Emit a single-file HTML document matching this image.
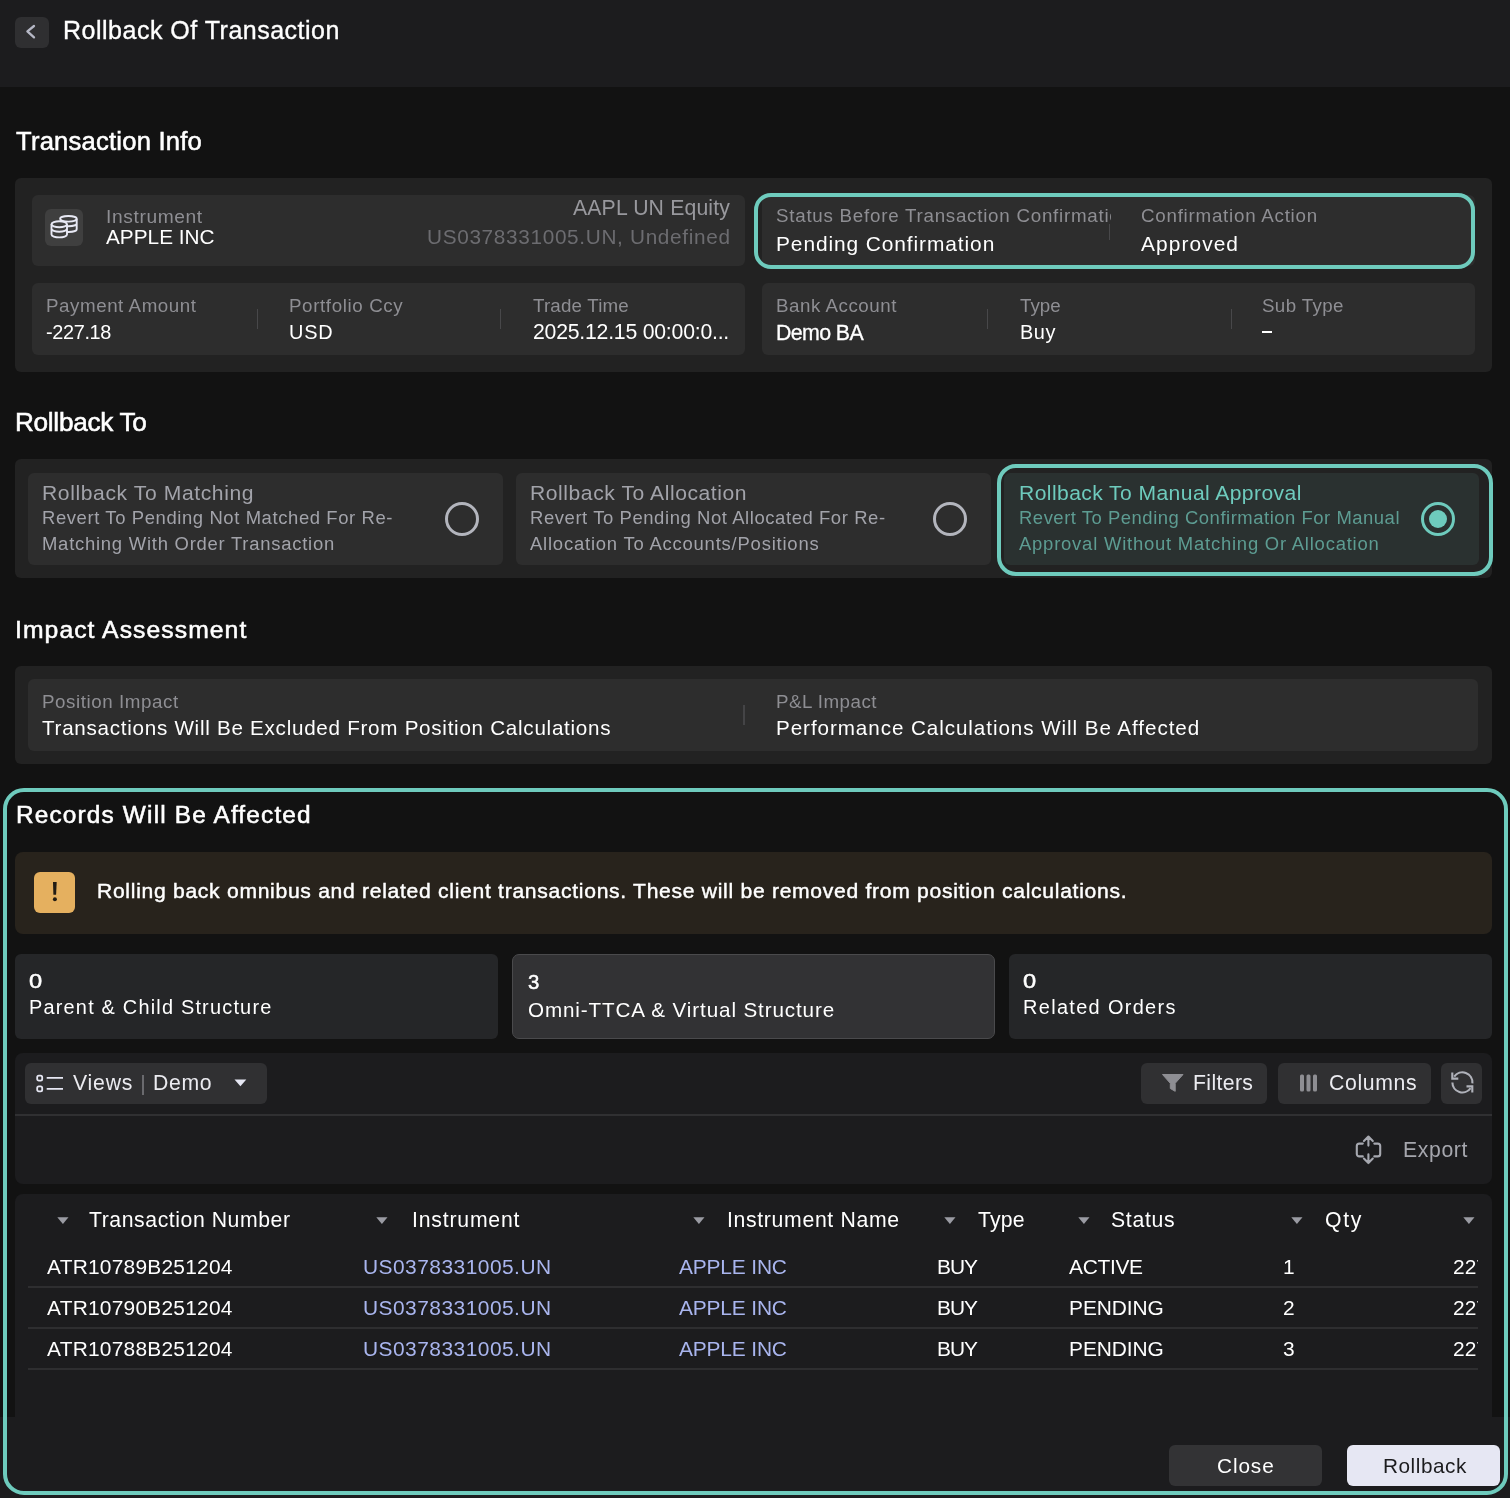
<!DOCTYPE html>
<html><head><meta charset="utf-8"><style>
html,body{margin:0;padding:0;}
body{width:1510px;height:1498px;background:#121212;position:relative;overflow:hidden;font-family:"Liberation Sans",sans-serif;}
.a{position:absolute;}
.t{white-space:nowrap;will-change:transform;}
</style></head><body>
<div class="a" style="left:0px;top:0px;width:1510px;height:87px;background:#1c1c1e;"></div>
<div class="a" style="left:15px;top:17px;width:34px;height:31px;background:#2f2f31;border-radius:6px;"></div>
<svg class="a" style="left:15px;top:17px" width="34" height="31" viewBox="0 0 34 31"><path d="M19 9 L12.4 14.4 L19 20.4" fill="none" stroke="#b6b8c6" stroke-width="2.3" stroke-linecap="round" stroke-linejoin="round"/></svg>
<div class="a t" style="left:63.00px;top:14.23px;font-size:25.00px;line-height:32px;color:#ffffff;letter-spacing:0.501px;-webkit-text-stroke:0.35px #ffffff;">Rollback Of Transaction</div>
<div class="a t" style="left:15.50px;top:125.03px;font-size:25.58px;line-height:33px;color:#ffffff;letter-spacing:0.218px;-webkit-text-stroke:0.55px #ffffff;">Transaction Info</div>
<div class="a" style="left:15px;top:178px;width:1477px;height:194px;background:#222222;border-radius:6px;"></div>
<div class="a" style="left:32px;top:195px;width:713px;height:71px;background:#2d2d2d;border-radius:6px;"></div>
<div class="a" style="left:45px;top:209px;width:37.5px;height:37px;background:#3f3f3f;border-radius:6px;"></div>
<svg class="a" style="left:45px;top:209px" width="38" height="37" viewBox="0 0 38 37"><g fill="none" stroke="#e8e9f5" stroke-width="1.9">
<ellipse cx="23.4" cy="9.8" rx="8.3" ry="2.8"/><path d="M31.7 9.8 V20.2 M15.1 14.5 A8.3 2.8 0 0 0 31.7 14.5 M15.1 20.2 A8.3 2.8 0 0 0 31.7 20.2"/>
<path d="M6.5 15.2 A7.75 3 0 0 1 22 15.2 V25.4 A7.75 3 0 0 1 6.5 25.4 Z" fill="#3f3f3f" stroke="none"/>
<ellipse cx="14.25" cy="15.2" rx="7.75" ry="3"/><path d="M6.5 15.2 V25.4 M22 15.2 V25.4 M6.5 19.7 A7.75 3 0 0 0 22 19.7 M6.5 25.4 A7.75 3 0 0 0 22 25.4"/>
</g></svg>
<div class="a t" style="left:106.20px;top:204.15px;font-size:19.19px;line-height:25px;color:#8e8e93;letter-spacing:0.616px;">Instrument</div>
<div class="a t" style="left:106.00px;top:223.39px;font-size:20.78px;line-height:27px;color:#ffffff;letter-spacing:0.012px;">APPLE INC</div>
<div class="a t" style="left:573.30px;top:193.94px;font-size:21.22px;line-height:28px;color:#98989d;letter-spacing:0.153px;">AAPL UN Equity</div>
<div class="a t" style="left:426.90px;top:223.19px;font-size:20.78px;line-height:27px;color:#6c6c70;letter-spacing:0.667px;">US0378331005.UN, Undefined</div>
<div class="a" style="left:762px;top:195px;width:713px;height:71px;background:#2d2d2d;border-radius:6px;"></div>
<div class="a t" style="left:776.00px;top:204.40px;font-size:18.75px;line-height:24px;color:#8e8e93;letter-spacing:0.749px;width:334.50px;overflow:hidden;">Status Before Transaction Confirmation</div>
<div class="a" style="left:1109px;top:224px;width:1px;height:16px;background:#48484a;"></div>
<div class="a t" style="left:1141.20px;top:204.40px;font-size:18.75px;line-height:24px;color:#8e8e93;letter-spacing:0.752px;">Confirmation Action</div>
<div class="a t" style="left:775.70px;top:230.14px;font-size:20.93px;line-height:27px;color:#ffffff;letter-spacing:0.898px;">Pending Confirmation</div>
<div class="a t" style="left:1141.00px;top:230.14px;font-size:20.93px;line-height:27px;color:#ffffff;letter-spacing:1.060px;">Approved</div>
<div class="a" style="left:32px;top:283px;width:713px;height:72px;background:#2d2d2d;border-radius:6px;"></div>
<div class="a t" style="left:46.00px;top:293.60px;font-size:18.75px;line-height:24px;color:#8e8e93;letter-spacing:0.555px;">Payment Amount</div>
<div class="a t" style="left:46.00px;top:318.80px;font-size:19.91px;line-height:26px;color:#ffffff;letter-spacing:-0.351px;">-227.18</div>
<div class="a" style="left:257px;top:309px;width:1px;height:20px;background:#48484a;"></div>
<div class="a t" style="left:289.00px;top:293.60px;font-size:18.75px;line-height:24px;color:#8e8e93;letter-spacing:0.616px;">Portfolio Ccy</div>
<div class="a t" style="left:289.00px;top:318.80px;font-size:19.91px;line-height:26px;color:#ffffff;letter-spacing:0.842px;">USD</div>
<div class="a" style="left:500px;top:309px;width:1px;height:20px;background:#48484a;"></div>
<div class="a t" style="left:532.60px;top:293.60px;font-size:18.75px;line-height:24px;color:#8e8e93;letter-spacing:0.175px;">Trade Time</div>
<div class="a t" style="left:532.60px;top:317.64px;font-size:21.22px;line-height:28px;color:#ffffff;letter-spacing:-0.217px;">2025.12.15 00:00:0...</div>
<div class="a" style="left:762px;top:283px;width:713px;height:72px;background:#2d2d2d;border-radius:6px;"></div>
<div class="a t" style="left:775.80px;top:293.60px;font-size:18.75px;line-height:24px;color:#8e8e93;letter-spacing:0.522px;">Bank Account</div>
<div class="a t" style="left:775.80px;top:318.79px;font-size:21.37px;line-height:28px;color:#ffffff;letter-spacing:-0.608px;-webkit-text-stroke:0.3px #ffffff;">Demo BA</div>
<div class="a" style="left:987px;top:309px;width:1px;height:20px;background:#48484a;"></div>
<div class="a t" style="left:1020.00px;top:293.60px;font-size:18.75px;line-height:24px;color:#8e8e93;letter-spacing:-0.029px;">Type</div>
<div class="a t" style="left:1020.00px;top:318.80px;font-size:19.91px;line-height:26px;color:#ffffff;letter-spacing:0.525px;">Buy</div>
<div class="a" style="left:1231px;top:309px;width:1px;height:20px;background:#48484a;"></div>
<div class="a t" style="left:1262.30px;top:293.60px;font-size:18.75px;line-height:24px;color:#8e8e93;letter-spacing:0.351px;">Sub Type</div>
<div class="a" style="left:1262px;top:331px;width:10px;height:2px;background:#ffffff;"></div>
<div class="a" style="left:754px;top:193px;width:721px;height:76px;box-sizing:border-box;border:4.3px solid #6ecbbd;border-radius:17px;"></div>
<div class="a t" style="left:15.40px;top:405.33px;font-size:26.16px;line-height:34px;color:#ffffff;letter-spacing:-0.294px;-webkit-text-stroke:0.55px #ffffff;">Rollback To</div>
<div class="a" style="left:15px;top:459px;width:1477px;height:119px;background:#222222;border-radius:6px;"></div>
<div class="a" style="left:28px;top:473px;width:475px;height:92px;background:#2d2d2d;border-radius:6px;"></div>
<div class="a t" style="left:42.00px;top:479.39px;font-size:21.08px;line-height:27px;color:#a2a3aa;letter-spacing:0.610px;">Rollback To Matching</div>
<div class="a t" style="left:42.00px;top:505.70px;font-size:18.46px;line-height:24px;color:#a2a3aa;letter-spacing:0.607px;">Revert To Pending Not Matched For Re-</div>
<div class="a t" style="left:42.00px;top:531.60px;font-size:18.46px;line-height:24px;color:#a2a3aa;letter-spacing:0.757px;">Matching With Order Transaction</div>
<div class="a" style="left:445px;top:502px;width:34px;height:34px;box-sizing:border-box;border:3.2px solid #b3b5bd;border-radius:50%"></div>
<div class="a" style="left:516px;top:473px;width:475px;height:92px;background:#2d2d2d;border-radius:6px;"></div>
<div class="a t" style="left:530.00px;top:479.39px;font-size:21.08px;line-height:27px;color:#a2a3aa;letter-spacing:0.565px;">Rollback To Allocation</div>
<div class="a t" style="left:530.00px;top:505.70px;font-size:18.46px;line-height:24px;color:#a2a3aa;letter-spacing:0.587px;">Revert To Pending Not Allocated For Re-</div>
<div class="a t" style="left:530.00px;top:531.60px;font-size:18.46px;line-height:24px;color:#a2a3aa;letter-spacing:0.793px;">Allocation To Accounts/Positions</div>
<div class="a" style="left:933px;top:502px;width:34px;height:34px;box-sizing:border-box;border:3.2px solid #b3b5bd;border-radius:50%"></div>
<div class="a" style="left:1004px;top:473px;width:475px;height:92px;background:#2a3130;border-radius:6px;"></div>
<div class="a t" style="left:1018.50px;top:479.39px;font-size:21.08px;line-height:27px;color:#6ecbbd;letter-spacing:0.421px;">Rollback To Manual Approval</div>
<div class="a t" style="left:1018.50px;top:505.70px;font-size:18.46px;line-height:24px;color:#5d9c92;letter-spacing:0.528px;">Revert To Pending Confirmation For Manual</div>
<div class="a t" style="left:1018.50px;top:531.60px;font-size:18.46px;line-height:24px;color:#5d9c92;letter-spacing:0.784px;">Approval Without Matching Or Allocation</div>
<div class="a" style="left:1421px;top:502px;width:34px;height:34px;box-sizing:border-box;border:3.3px solid #6ecbbd;border-radius:50%"></div>
<div class="a" style="left:1429px;top:510px;width:18px;height:18px;background:#6ecbbd;border-radius:50%"></div>
<div class="a" style="left:997px;top:464px;width:496px;height:112px;box-sizing:border-box;border:4.5px solid #6ecbbd;border-radius:19px;"></div>
<div class="a t" style="left:15.30px;top:613.83px;font-size:24.71px;line-height:32px;color:#ffffff;letter-spacing:1.067px;-webkit-text-stroke:0.55px #ffffff;">Impact Assessment</div>
<div class="a" style="left:15px;top:666px;width:1477px;height:98px;background:#222222;border-radius:6px;"></div>
<div class="a" style="left:28px;top:679px;width:1450px;height:72px;background:#2d2d2d;border-radius:6px;"></div>
<div class="a t" style="left:42.00px;top:689.80px;font-size:18.75px;line-height:24px;color:#8e8e93;letter-spacing:0.575px;">Position Impact</div>
<div class="a t" style="left:42.00px;top:714.24px;font-size:20.64px;line-height:27px;color:#ffffff;letter-spacing:0.722px;">Transactions Will Be Excluded From Position Calculations</div>
<div class="a" style="left:743px;top:705px;width:2px;height:20px;background:#444446;"></div>
<div class="a t" style="left:776.20px;top:689.80px;font-size:18.75px;line-height:24px;color:#8e8e93;letter-spacing:0.468px;">P&amp;L Impact</div>
<div class="a t" style="left:776.00px;top:714.24px;font-size:20.64px;line-height:27px;color:#ffffff;letter-spacing:0.931px;">Performance Calculations Will Be Affected</div>
<div class="a t" style="left:15.60px;top:799.33px;font-size:24.42px;line-height:32px;color:#ffffff;letter-spacing:1.151px;-webkit-text-stroke:0.55px #ffffff;">Records Will Be Affected</div>
<div class="a" style="left:15px;top:852px;width:1477px;height:82px;background:#28231c;border-radius:8px;"></div>
<div class="a" style="left:34px;top:872px;width:40.5px;height:40.5px;background:#e5b05f;border-radius:6px;"></div>
<svg class="a" style="left:34px;top:872px" width="41" height="41" viewBox="0 0 41 41"><path d="M19 10.1 H22.7 L22.1 22.7 H19.4 Z" fill="#221c14"/><circle cx="20.9" cy="27.2" r="2" fill="#221c14"/></svg>
<div class="a t" style="left:97.00px;top:876.99px;font-size:21.08px;line-height:27px;color:#ffffff;letter-spacing:0.713px;-webkit-text-stroke:0.45px #ffffff;">Rolling back omnibus and related client transactions. These will be removed from position calculations.</div>
<div class="a" style="left:15px;top:954px;width:483px;height:85px;background:#252628;border-radius:6px;"></div>
<div class="a t" style="left:28.90px;top:967.19px;font-size:21.08px;line-height:27px;color:#ffffff;letter-spacing:0.000px;-webkit-text-stroke:0.5px #ffffff;transform:scaleX(1.12);transform-origin:0 0;">0</div>
<div class="a t" style="left:28.90px;top:994.20px;font-size:19.91px;line-height:26px;color:#ffffff;letter-spacing:1.202px;">Parent &amp; Child Structure</div>
<div class="a" style="left:512px;top:954px;width:483px;height:85px;box-sizing:border-box;background:#323234;border:1.5px solid #4a4a4c;border-radius:7px"></div>
<div class="a t" style="left:527.70px;top:969.45px;font-size:20.35px;line-height:26px;color:#ffffff;letter-spacing:0.000px;-webkit-text-stroke:0.5px #ffffff;">3</div>
<div class="a t" style="left:527.70px;top:995.74px;font-size:20.64px;line-height:27px;color:#ffffff;letter-spacing:0.878px;">Omni-TTCA &amp; Virtual Structure</div>
<div class="a" style="left:1009px;top:954px;width:483px;height:85px;background:#252628;border-radius:6px;"></div>
<div class="a t" style="left:1022.60px;top:967.49px;font-size:21.08px;line-height:27px;color:#ffffff;letter-spacing:0.000px;-webkit-text-stroke:0.5px #ffffff;transform:scaleX(1.12);transform-origin:0 0;">0</div>
<div class="a t" style="left:1022.50px;top:994.20px;font-size:19.91px;line-height:26px;color:#ffffff;letter-spacing:1.345px;">Related Orders</div>
<div class="a" style="left:15px;top:1053px;width:1477px;height:131px;background:#1c1c1e;border-radius:8px;"></div>
<div class="a" style="left:25px;top:1063px;width:242px;height:41px;background:#303032;border-radius:6px;"></div>
<svg class="a" style="left:30px;top:1068px" width="40" height="30" viewBox="0 0 40 30"><g fill="none" stroke="#e6e7f3" stroke-width="1.8">
<rect x="7.2" y="7.6" width="5" height="5" rx="1.6"/><rect x="7.2" y="18.3" width="5" height="5" rx="1.6"/>
<path d="M16.7 9.9 H33 M16.7 20.9 H33"/></g></svg>
<div class="a t" style="left:72.50px;top:1068.94px;font-size:21.22px;line-height:28px;color:#ebebf0;letter-spacing:0.791px;">Views</div>
<div class="a" style="left:142px;top:1075px;width:1.5px;height:20px;background:#6a6a6e;"></div>
<div class="a t" style="left:152.90px;top:1068.94px;font-size:21.22px;line-height:28px;color:#ebebf0;letter-spacing:0.647px;">Demo</div>
<svg class="a" style="left:234px;top:1079px" width="13" height="8" viewBox="0 0 13 8"><path d="M0.5 0.5 H12.3 L6.4 7.3 Z" fill="#e6e7f3"/></svg>
<div class="a" style="left:1141px;top:1063px;width:126px;height:41px;background:#303032;border-radius:6px;"></div>
<svg class="a" style="left:1162px;top:1074px" width="22" height="18" viewBox="0 0 22 18"><path d="M0.5 0.5 H21 L13.2 9.3 V17.3 L8.3 14.5 V9.3 Z" fill="#8e8e93" stroke="#8e8e93" stroke-linejoin="round"/></svg>
<div class="a t" style="left:1192.90px;top:1068.94px;font-size:21.22px;line-height:28px;color:#ebebf0;letter-spacing:0.363px;">Filters</div>
<div class="a" style="left:1278px;top:1063px;width:153px;height:41px;background:#303032;border-radius:6px;"></div>
<svg class="a" style="left:1299px;top:1074px" width="20" height="18" viewBox="0 0 20 18"><g fill="#8e8e93"><rect x="1" y="0.5" width="4" height="17" rx="1.5"/><rect x="7.5" y="0.5" width="4" height="17" rx="1.5"/><rect x="14" y="0.5" width="4" height="17" rx="1.5"/></g></svg>
<div class="a t" style="left:1329.30px;top:1068.94px;font-size:21.22px;line-height:28px;color:#ebebf0;letter-spacing:0.647px;">Columns</div>
<div class="a" style="left:1441px;top:1063px;width:41px;height:41px;background:#303032;border-radius:6px;"></div>
<svg class="a" style="left:1449px;top:1070px" width="26" height="26" viewBox="0 0 26 26"><g fill="none" stroke="#b0b2ba" stroke-width="2.1" stroke-linecap="butt" stroke-linejoin="miter">
<path d="M5.2 6.7 A10 10 0 0 1 23.4 13.3"/><path d="M3.3 2.5 V8.6 H9.3"/>
<path d="M3.4 12.4 A10 10 0 0 0 21.6 18.1"/><path d="M17.5 16.4 H23.3 V22.5"/></g></svg>
<div class="a" style="left:15px;top:1114px;width:1477px;height:2px;background:#303032;"></div>
<svg class="a" style="left:1353px;top:1134px" width="32" height="34" viewBox="0 0 32 34"><g fill="none" stroke="#a6a8b0" stroke-width="2.1" stroke-linecap="round" stroke-linejoin="round">
<path d="M9.8 9.6 H6.3 A2.5 2.5 0 0 0 3.8 12.1 V19.9 A2.5 2.5 0 0 0 6.3 22.4 H9.8"/><path d="M21.3 9.6 H24.7 A2.5 2.5 0 0 1 27.2 12.1 V19.9 A2.5 2.5 0 0 1 24.7 22.4 H21.3"/>
<path d="M15.4 2.9 V11.6 M10.9 7.1 L15.4 2.6 L19.8 7.1"/><path d="M15.4 20.3 V29 M10.9 24.6 L15.4 29.1 L19.8 24.6"/></g></svg>
<div class="a t" style="left:1403.30px;top:1136.04px;font-size:21.22px;line-height:28px;color:#a5a6ad;letter-spacing:0.614px;">Export</div>
<div class="a" style="left:15px;top:1194px;width:1477px;height:223px;background:#1c1c1e;border-radius:8px 8px 0 0;"></div>
<div class="a" style="left:0px;top:1417px;width:1510px;height:81px;background:#1c1c1e;"></div>
<div class="a" style="left:1492px;top:1194px;width:12px;height:223px;background:#121212;"></div>
<svg class="a" style="left:57px;top:1216.6px" width="12" height="8" viewBox="0 0 12 8"><path d="M0.3 0.3 H11.5 L5.9 7 Z" fill="#9a9ba3"/></svg>
<div class="a t" style="left:89.00px;top:1205.84px;font-size:21.22px;line-height:28px;color:#ffffff;letter-spacing:0.564px;">Transaction Number</div>
<svg class="a" style="left:376px;top:1216.6px" width="12" height="8" viewBox="0 0 12 8"><path d="M0.3 0.3 H11.5 L5.9 7 Z" fill="#9a9ba3"/></svg>
<div class="a t" style="left:411.50px;top:1205.84px;font-size:21.22px;line-height:28px;color:#ffffff;letter-spacing:0.803px;">Instrument</div>
<svg class="a" style="left:692.9px;top:1216.6px" width="12" height="8" viewBox="0 0 12 8"><path d="M0.3 0.3 H11.5 L5.9 7 Z" fill="#9a9ba3"/></svg>
<div class="a t" style="left:726.90px;top:1205.84px;font-size:21.22px;line-height:28px;color:#ffffff;letter-spacing:0.667px;">Instrument Name</div>
<svg class="a" style="left:944.3px;top:1216.6px" width="12" height="8" viewBox="0 0 12 8"><path d="M0.3 0.3 H11.5 L5.9 7 Z" fill="#9a9ba3"/></svg>
<div class="a t" style="left:978.30px;top:1205.84px;font-size:21.22px;line-height:28px;color:#ffffff;letter-spacing:0.217px;">Type</div>
<svg class="a" style="left:1077.5px;top:1216.6px" width="12" height="8" viewBox="0 0 12 8"><path d="M0.3 0.3 H11.5 L5.9 7 Z" fill="#9a9ba3"/></svg>
<div class="a t" style="left:1111.40px;top:1205.84px;font-size:21.22px;line-height:28px;color:#ffffff;letter-spacing:0.688px;">Status</div>
<svg class="a" style="left:1291px;top:1216.6px" width="12" height="8" viewBox="0 0 12 8"><path d="M0.3 0.3 H11.5 L5.9 7 Z" fill="#9a9ba3"/></svg>
<div class="a t" style="left:1324.70px;top:1205.84px;font-size:21.22px;line-height:28px;color:#ffffff;letter-spacing:1.651px;">Qty</div>
<svg class="a" style="left:1462.5px;top:1216.6px" width="12" height="8" viewBox="0 0 12 8"><path d="M0.3 0.3 H11.5 L5.9 7 Z" fill="#9a9ba3"/></svg>
<div class="a t" style="left:47.00px;top:1253.44px;font-size:20.93px;line-height:27px;color:#ffffff;letter-spacing:0.228px;">ATR10789B251204</div>
<div class="a t" style="left:363.20px;top:1253.44px;font-size:20.93px;line-height:27px;color:#a9b5ee;letter-spacing:0.474px;">US0378331005.UN</div>
<div class="a t" style="left:679.00px;top:1253.44px;font-size:20.93px;line-height:27px;color:#a9b5ee;letter-spacing:-0.170px;">APPLE INC</div>
<div class="a t" style="left:936.50px;top:1253.44px;font-size:20.93px;line-height:27px;color:#ffffff;letter-spacing:-1.006px;">BUY</div>
<div class="a t" style="left:1068.80px;top:1253.44px;font-size:20.93px;line-height:27px;color:#ffffff;letter-spacing:-0.312px;">ACTIVE</div>
<div class="a t" style="left:1282.50px;top:1253.44px;font-size:20.93px;line-height:27px;color:#ffffff;letter-spacing:0.000px;">1</div>
<div class="a t" style="left:1452.90px;top:1253.44px;font-size:20.93px;line-height:27px;color:#ffffff;letter-spacing:0.000px;width:24.90px;overflow:hidden;">227</div>
<div class="a" style="left:28px;top:1286px;width:1450px;height:2px;background:#2e2e30;"></div>
<div class="a t" style="left:47.00px;top:1294.44px;font-size:20.93px;line-height:27px;color:#ffffff;letter-spacing:0.228px;">ATR10790B251204</div>
<div class="a t" style="left:363.20px;top:1294.44px;font-size:20.93px;line-height:27px;color:#a9b5ee;letter-spacing:0.474px;">US0378331005.UN</div>
<div class="a t" style="left:679.00px;top:1294.44px;font-size:20.93px;line-height:27px;color:#a9b5ee;letter-spacing:-0.170px;">APPLE INC</div>
<div class="a t" style="left:936.50px;top:1294.44px;font-size:20.93px;line-height:27px;color:#ffffff;letter-spacing:-1.006px;">BUY</div>
<div class="a t" style="left:1068.80px;top:1294.44px;font-size:20.93px;line-height:27px;color:#ffffff;letter-spacing:-0.073px;">PENDING</div>
<div class="a t" style="left:1282.50px;top:1294.44px;font-size:20.93px;line-height:27px;color:#ffffff;letter-spacing:0.000px;">2</div>
<div class="a t" style="left:1452.90px;top:1294.44px;font-size:20.93px;line-height:27px;color:#ffffff;letter-spacing:0.000px;width:24.90px;overflow:hidden;">227</div>
<div class="a" style="left:28px;top:1327px;width:1450px;height:2px;background:#2e2e30;"></div>
<div class="a t" style="left:47.00px;top:1335.44px;font-size:20.93px;line-height:27px;color:#ffffff;letter-spacing:0.228px;">ATR10788B251204</div>
<div class="a t" style="left:363.20px;top:1335.44px;font-size:20.93px;line-height:27px;color:#a9b5ee;letter-spacing:0.474px;">US0378331005.UN</div>
<div class="a t" style="left:679.00px;top:1335.44px;font-size:20.93px;line-height:27px;color:#a9b5ee;letter-spacing:-0.170px;">APPLE INC</div>
<div class="a t" style="left:936.50px;top:1335.44px;font-size:20.93px;line-height:27px;color:#ffffff;letter-spacing:-1.006px;">BUY</div>
<div class="a t" style="left:1068.80px;top:1335.44px;font-size:20.93px;line-height:27px;color:#ffffff;letter-spacing:-0.073px;">PENDING</div>
<div class="a t" style="left:1282.50px;top:1335.44px;font-size:20.93px;line-height:27px;color:#ffffff;letter-spacing:0.000px;">3</div>
<div class="a t" style="left:1452.90px;top:1335.44px;font-size:20.93px;line-height:27px;color:#ffffff;letter-spacing:0.000px;width:24.90px;overflow:hidden;">227</div>
<div class="a" style="left:28px;top:1368px;width:1450px;height:2px;background:#2e2e30;"></div>
<div class="a" style="left:1169px;top:1445px;width:153px;height:41px;background:#333335;border-radius:6px;"></div>
<div class="a t" style="left:1216.80px;top:1452.29px;font-size:20.78px;line-height:27px;color:#ffffff;letter-spacing:0.899px;">Close</div>
<div class="a" style="left:1347px;top:1445px;width:153px;height:41px;background:#e6e7f3;border-radius:6px;"></div>
<div class="a t" style="left:1382.50px;top:1452.29px;font-size:20.78px;line-height:27px;color:#1c1c1e;letter-spacing:0.527px;">Rollback</div>
<div class="a" style="left:3px;top:788px;width:1505px;height:707px;box-sizing:border-box;border:4.2px solid #6ecbbd;border-radius:21px;"></div>
</body></html>
